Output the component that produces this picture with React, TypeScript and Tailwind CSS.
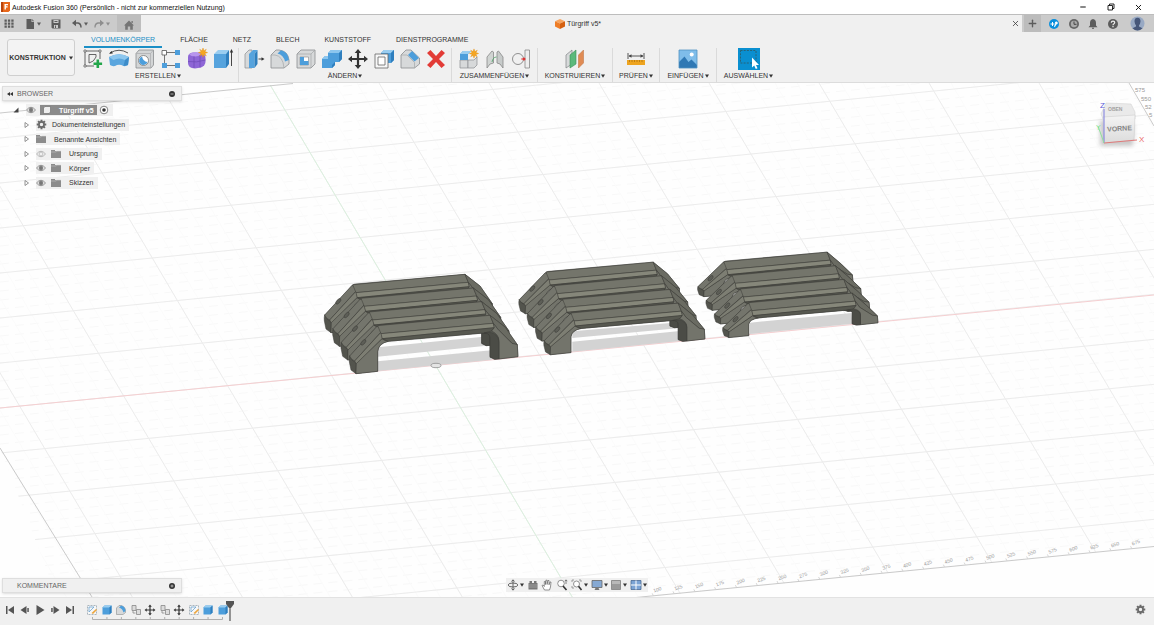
import React from "react";
import { Minus, X, Plus } from "lucide-react";

type Kids = { children: React.ReactNode };

/* ---------- small shared pieces ---------- */

const Caret = () => (
  <svg viewBox="0 0 4 4" className="h-1 w-1 shrink-0" aria-hidden="true">
    <path d="M0 .5H4L2 3.8Z" fill="currentColor" />
  </svg>
);

const Ico = ({ children }: Kids) => (
  <svg viewBox="0 0 22 22" className="h-[22px] w-[22px] shrink-0" aria-hidden="true">
    {children}
  </svg>
);

const Mini = ({ children }: Kids) => (
  <svg viewBox="0 0 12 12" className="h-3 w-3 shrink-0" aria-hidden="true">
    {children}
  </svg>
);

const starPath = "M0-4.6 1-1.9 3.3-3.3 1.9-1 4.6 0 1.9 1 3.3 3.3 1 1.9 0 4.6-1 1.9-3.3 3.3-1.9 1-4.6 0-1.9-1-3.3-3.3-1-1.9Z";
const Star = ({ x, y }: { x: number; y: number }) => (
  <path transform={`translate(${x} ${y})`} d={starPath} fill="#f5a623" stroke="#e08d10" strokeWidth=".4" />
);

const movePath = "M11 1 14.3 5H12.1V9.9H17V7.7L21 11 17 14.3V12.1H12.1V17H14.3L11 21 7.7 17H9.9V12.1H5V14.3L1 11 5 7.7V9.9H9.9V5H7.7Z";

const gearTeeth = [0, 45, 90, 135, 180, 225, 270, 315];
const Gear = () => (
  <svg viewBox="-6 -6 12 12" className="h-[11px] w-[11px] shrink-0" aria-hidden="true">
    {gearTeeth.map((a) => (
      <rect key={a} x="-1.1" y="-5.2" width="2.2" height="3" transform={`rotate(${a})`} fill="#6a6a6a" />
    ))}
    <circle r="2.8" fill="none" stroke="#6a6a6a" strokeWidth="1.8" />
  </svg>
);

/* ---------- ribbon icons ---------- */

const icons = {
  sketch: (
    <Ico>
      <path d="M3 3H18M3 3V18H12M18 3V11" fill="none" stroke="#555" strokeWidth=".9" />
      <path d="M2 2h2v2H2zM17 2h2v2h-2zM2 17h2v2H2z" fill="#fff" stroke="#555" strokeWidth=".7" />
      <path d="M7 6.500H14L14 9Q12 14 7 15Z" fill="none" stroke="#555" strokeWidth=".9" />
      <path d="M14.500 11.500h2.600v3h3v2.600h-3v3h-2.600v-3h-3v-2.600h3z" fill="#22a64a" />
    </Ico>
  ),
  revolve: (
    <Ico>
      <path d="M2 5Q11-.5 20 5" fill="none" stroke="#444" strokeWidth=".9" />
      <path d="M3.600 2.900 1 5.800 4.800 5.500z" fill="#333" />
      <path d="M1 9Q11 3.500 21 9L20 17Q18 18.500 15.500 18Q11 15.500 7 18Q4 18.500 2 17Z" fill="#5ba6de" />
      <path d="M1 9Q11 3.500 21 9L17 12Q11 9 5.500 12Z" fill="#8cc6ee" />
      <path d="M17 12 21 9 20 17 15.500 18Z" fill="#3d8cc9" />
    </Ico>
  ),
  hole: (
    <Ico>
      <path d="M2 5.500 5 2H19.500V17L17 20H2Z" fill="#d3d5d6" stroke="#8a8d8f" strokeWidth=".8" />
      <path d="M2 5.500H16.500V20M16.500 5.500 19.500 2" fill="none" stroke="#a9abac" strokeWidth=".7" />
      <circle cx="9.500" cy="12.500" r="5" fill="#fff" stroke="#777" strokeWidth=".8" />
      <path d="M8 8.600A4.300 4.300 0 1 0 13.500 14Q9 13.500 8 8.600Z" fill="#4d9edb" />
    </Ico>
  ),
  pattern: (
    <Ico>
      <path d="M5 4.500H17M4.500 6V18M6 17.500H16" fill="none" stroke="#555" strokeWidth=".8" />
      <path d="M2 2.500H6.500V7H2Z" fill="#fff" stroke="#555" strokeWidth=".8" />
      <path d="M15 2h5v5h-5zM2 15h5v5H2zM15 15h5v5h-5z" fill="#4d9edb" />
    </Ico>
  ),
  form: (
    <Ico>
      <path d="M2 9Q2 5 7 4.500H15Q19.500 6 19.500 10V14Q19 18 15 19.500L9 20.500Q2 20 2 15Z" fill="#8e66d6" />
      <path d="M3 6.500Q6 4 10 4.300L17 5.500Q13 8 9.500 8.500Q5 8.500 3 6.500Z" fill="#b795ee" />
      <path d="M8 8.500V20M14 7V19.500M2 13.500Q10 15 19.500 12" fill="none" stroke="#6d49b5" strokeWidth=".7" />
      <Star x={17} y={4.600} />
    </Ico>
  ),
  extrude: (
    <Ico>
      <path d="M2 6 6 2H17L14 6Z" fill="#9acdf0" />
      <path d="M2 6H14V20H2Z" fill="#56a3dd" />
      <path d="M14 6 17 2V16L14 20Z" fill="#2f7fbe" />
      <path d="M19.500 18V4" stroke="#333" strokeWidth=".9" />
      <path d="M19.500 1 21.200 4.500H17.800Z" fill="#333" />
    </Ico>
  ),
  pushPull: (
    <Ico>
      <path d="M2 6 6 2H9V20H2Z" fill="#d7d9da" stroke="#8a8d8f" strokeWidth=".7" />
      <path d="M6 6 10 2H14.500L11.500 6V20H6Z" fill="#56a3dd" />
      <path d="M11.500 6 14.500 2V16L11.500 20Z" fill="#2f7fbe" />
      <path d="M15.500 11H19" stroke="#333" strokeWidth=".9" />
      <path d="M21.500 11 18.500 9.200V12.800Z" fill="#333" />
    </Ico>
  ),
  fillet: (
    <Ico>
      <path d="M2 7 7 2H10Q19 3 20 12V16L15 20H2Z" fill="#d7d9da" stroke="#8a8d8f" strokeWidth=".8" />
      <path d="M2 7H6Q14 8 15 20" fill="none" stroke="#a4a6a7" strokeWidth=".7" />
      <path d="M8.500 5.500 12 2.200Q19 4 20 12L16 13.500Q14.500 7 8.500 5.500Z" fill="#4d9edb" />
    </Ico>
  ),
  shell: (
    <Ico>
      <path d="M2 6 6 2H20V16L16 20H2Z" fill="#d7d9da" stroke="#8a8d8f" strokeWidth=".8" />
      <path d="M2 6H16V20M16 6 20 2" fill="none" stroke="#a4a6a7" strokeWidth=".7" />
      <path d="M5 9H13.500V17H5Z" fill="#fff" stroke="#888" strokeWidth=".6" />
      <path d="M5 9 9 9V13L13.500 13V17H5Z" fill="#4d9edb" />
    </Ico>
  ),
  combine: (
    <Ico>
      <path d="M7 5 10 2H21V11L18 14H14V17L11 20H1V11L4 8H7Z" fill="#4d9edb" />
      <path d="M7 5 10 2H21L18 5ZM1 11 4 8H7V11Z" fill="#8cc6ee" />
      <path d="M18 5 21 2V11L18 14ZM11 17 14 14V17L11 20Z" fill="#2f7fbe" />
    </Ico>
  ),
  move: (
    <Ico>
      <path d={movePath} fill="#333" />
    </Ico>
  ),
  offset: (
    <Ico>
      <path d="M8 5 11 2H21V12L18 15H8Z" fill="#4d9edb" />
      <path d="M8 5 11 2H21L18 5Z" fill="#9acdf0" />
      <path d="M18 5 21 2V12L18 15Z" fill="#2f7fbe" />
      <path d="M2 6H15V20H2Z" fill="#f7f7f7" stroke="#666" strokeWidth=".8" />
      <path d="M5 9H12V17H5Z" fill="#fff" stroke="#666" strokeWidth=".8" />
    </Ico>
  ),
  chamfer: (
    <Ico>
      <path d="M2 7 7 2H12L20.500 10V16L15.500 20H2Z" fill="#d7d9da" stroke="#8a8d8f" strokeWidth=".8" />
      <path d="M2 7H8L15.500 14.500V20" fill="none" stroke="#a4a6a7" strokeWidth=".7" />
      <path d="M9 7 13 3 20 10 15.500 13.500Z" fill="#4d9edb" />
    </Ico>
  ),
  remove: (
    <Ico>
      <path d="M5.500 2 11 8 16.500 2 20 5 14 11 20 17 16.500 20 11 14 5.500 20 2 17 8 11 2 5Z" fill="#e23b36" />
    </Ico>
  ),
  newComponent: (
    <Ico>
      <path d="M2 12 10 12V20H2Z" fill="#d7d9da" stroke="#8a8d8f" strokeWidth=".7" />
      <path d="M10 12H16L19 9V17L16 20H10Z" fill="#d7d9da" stroke="#8a8d8f" strokeWidth=".7" />
      <path d="M2 6 5 3H13L10 6V12H2Z" fill="#4d9edb" />
      <path d="M2 6 5 3H13L10 6Z" fill="#9acdf0" />
      <Star x={16} y={5.500} />
    </Ico>
  ),
  joint: (
    <Ico>
      <path d="M3 9 8 3 9.500 4V15L6 16 3 20Z" fill="#d0d4d2" stroke="#888" strokeWidth=".8" />
      <path d="M13 4 14.500 3 19 9V20L16 16 13 15Z" fill="#c7cbca" stroke="#888" strokeWidth=".8" />
      <path d="M8 14Q9 9 12.500 9" fill="none" stroke="#4aa364" strokeWidth=".8" />
    </Ico>
  ),
  jointOrigin: (
    <Ico>
      <circle cx="8" cy="11" r="5.500" fill="none" stroke="#777" strokeWidth=".8" />
      <path d="M15 2H19.500V20H15Z" fill="#eee" stroke="#888" strokeWidth=".8" />
      <path d="M11 11H15" stroke="#d33" strokeWidth=".8" />
      <circle cx="14" cy="11" r="1.500" fill="#d33" />
    </Ico>
  ),
  plane: (
    <Ico>
      <path d="M2 7 8 2V16L2 20Z" fill="#d7d9da" stroke="#7f8385" strokeWidth=".7" />
      <path d="M6 7 12 2V16L6 20Z" fill="#5bb97b" stroke="#3d8e59" strokeWidth=".6" />
      <path d="M14.500 7 19.500 2V15L14.500 20Z" fill="#e08b54" stroke="#bb6c3a" strokeWidth=".5" />
    </Ico>
  ),
  measure: (
    <Ico>
      <path d="M3 5V11M19 5V11M4 8H18" stroke="#444" strokeWidth=".9" />
      <path d="M3.500 8 6.500 6.300V9.700ZM18.500 8 15.500 6.300V9.700Z" fill="#444" />
      <path d="M2 12H20V17H2Z" fill="#eea41f" />
      <path d="M4.500 12V14M7 12V14M9.500 12V14M12 12V14M14.500 12V14M17 12V14" stroke="#a86f0c" strokeWidth=".7" />
    </Ico>
  ),
  insert: (
    <Ico>
      <path d="M2 2H20V20H2Z" fill="#7fbdea" />
      <path d="M2 14 7.500 8.500 11.500 14 14.500 11.500 20 17V20H2Z" fill="#2f78b4" />
      <circle cx="14.700" cy="6.500" r="2" fill="#fff" />
      <path d="M2 2H20V20H2Z" fill="none" stroke="#5292c2" strokeWidth=".8" />
    </Ico>
  ),
  select: (
    <Ico>
      <path d="M0 0H22V22H0Z" fill="#0a8fd0" />
      <path d="M2.500 2.500H18V15H2.500Z" fill="none" stroke="#2b5f6e" strokeWidth=".9" strokeDasharray="2 1.200" />
      <path d="M14 9.500V19.500L16.200 17.500 17.800 21 19.500 20.200 18 17H21Z" fill="#fff" />
    </Ico>
  ),
};

type Group = { label: string; width: string; tools: [string, React.ReactNode][] };

const groups: Group[] = [
  {
    label: "ERSTELLEN",
    width: "w-[160px]",
    tools: [
      ["Skizze erstellen", icons.sketch],
      ["Drehen", icons.revolve],
      ["Bohrung", icons.hole],
      ["Anordnung", icons.pattern],
      ["Form", icons.form],
      ["Extrusion", icons.extrude],
    ],
  },
  {
    label: "ÄNDERN",
    width: "w-[213px]",
    tools: [
      ["Drücken/Ziehen", icons.pushPull],
      ["Abrundung", icons.fillet],
      ["Schale", icons.shell],
      ["Kombinieren", icons.combine],
      ["Verschieben", icons.move],
      ["Versatz", icons.offset],
      ["Fase", icons.chamfer],
      ["Entfernen", icons.remove],
    ],
  },
  {
    label: "ZUSAMMENFÜGEN",
    width: "w-[86px]",
    tools: [
      ["Neue Komponente", icons.newComponent],
      ["Verbinden", icons.joint],
      ["Verbindungsursprung", icons.jointOrigin],
    ],
  },
  { label: "KONSTRUIEREN", width: "w-[75px]", tools: [["Ebene", icons.plane]] },
  { label: "PRÜFEN", width: "w-[47px]", tools: [["Messen", icons.measure]] },
  { label: "EINFÜGEN", width: "w-[57px]", tools: [["Bild", icons.insert]] },
  { label: "AUSWÄHLEN", width: "w-[64px]", tools: [["Auswählen", icons.select]] },
];

const tabs = ["VOLUMENKÖRPER", "FLÄCHE", "NETZ", "BLECH", "KUNSTSTOFF", "DIENSTPROGRAMME"];

/* ---------- header ---------- */

function TitleBar() {
  return (
    <header className="flex h-[14px] items-center bg-white pl-px text-[#111]">
      <svg viewBox="0 0 9 10" className="h-[10px] w-[9px]" aria-hidden="true">
        <path d="M0 0H9V8.500L7.500 10H0Z" fill="#e8681c" />
        <path d="M0 0H2V10H0Z" fill="#b8440d" />
        <path d="M3.500 2H7V3.200H4.900V4.300H6.600V5.400H4.900V7.500H3.500Z" fill="#fff" />
      </svg>
      <h1 className="ml-[2px] flex-1 whitespace-nowrap text-[7px] leading-none">
        Autodesk Fusion 360 (Persönlich - nicht zur kommerziellen Nutzung)
      </h1>
      <div className="flex w-[75px] justify-between pr-[11px]">
        <button aria-label="Minimieren"><Minus size={8} strokeWidth={3} /></button>
        <button aria-label="Wiederherstellen">
          <svg viewBox="0 0 8 8" className="h-2 w-2" aria-hidden="true">
            <path d="M1 2.500H5.500V7H1ZM2.500 2.500V1H7V5.500H5.500" fill="none" stroke="#111" strokeWidth=".9" />
          </svg>
        </button>
        <button aria-label="Schließen"><X size={9} strokeWidth={2.5} /></button>
      </div>
    </header>
  );
}

function AppBar() {
  return (
    <div className="flex h-[18px] items-stretch border-t border-[#bdbdbd] bg-[#cbcbcb] text-[#5c5c5c]">
      <div className="flex w-[117px] items-center pl-[3px]">
        <button aria-label="Datenbereich" className="mr-[9px]">
          <Mini>
            {[2, 5, 8].map((y) => (
              <path key={y} d={`M1.500 ${y - 0.500}h2.300v2.200H1.500zM4.900 ${y - 0.500}h2.300v2.200H4.900zM8.300 ${y - 0.500}h2.300v2.200H8.300z`} fill="#5c5c5c" />
            ))}
          </Mini>
        </button>
        <button aria-label="Datei" className="mr-[9px] flex items-center gap-px">
          <Mini><path d="M2.500 1H7.500V4H10V11H2.500ZM8.300 1 10 3.200H8.300Z" fill="#5c5c5c" /></Mini>
          <Caret />
        </button>
        <button aria-label="Speichern" className="mr-[9px]">
          <Mini>
            <path d="M1.500 1.500H10.500V10.500H2.500L1.500 9.500Z" fill="#5c5c5c" />
            <path d="M3.500 2H8.500V5H3.500ZM4 7H8V10H4Z" fill="#cbcbcb" />
            <path d="M5 7.500H6V10H5ZM4.500 3H7.500V4H4.500Z" fill="#5c5c5c" />
          </Mini>
        </button>
        <button aria-label="Rückgängig" className="mr-[5px] flex items-center gap-px">
          <Mini>
            <path d="M3 5H7Q10 5.500 10 9.500" fill="none" stroke="#5c5c5c" strokeWidth="1.500" />
            <path d="M1 5 5 1.800V8.200Z" fill="#5c5c5c" />
          </Mini>
          <Caret />
        </button>
        <button aria-label="Wiederholen" className="flex items-center gap-px text-[#8e8e8e]">
          <Mini>
            <path d="M9 5H5Q2 5.500 2 9.500" fill="none" stroke="#8e8e8e" strokeWidth="1.300" />
            <path d="M11 5 7 1.800V8.200Z" fill="#8e8e8e" />
          </Mini>
          <Caret />
        </button>
      </div>
      <button aria-label="Startseite" className="flex w-6 items-center justify-center bg-[#bebebe] pt-[2px]">
        <Mini><path d="M6 1.500 11 6.500H9.800V10.800H7.200V7.500H4.800V10.800H2.200V6.500H1ZM8.500 2H9.800V4H8.500Z" fill="#757575" /></Mini>
      </button>
      <div className="flex flex-1 items-center bg-[#f0f0f0] pr-[2px] text-[#333]">
        <div className="flex flex-1 items-center justify-center gap-[2px] pl-1 text-[7px]">
          <svg viewBox="0 0 10 10" className="h-[10px] w-[10px]" aria-hidden="true">
            <path d="M5 0 10 2.200 5 4.500 0 2.200Z" fill="#f7a45e" />
            <path d="M0 2.200 5 4.500V10L0 7.500Z" fill="#ee7d26" />
            <path d="M10 2.200 5 4.500V10L10 7.500Z" fill="#d5600f" />
          </svg>
          <span>Türgriff v5*</span>
        </div>
        <button aria-label="Dokument schließen"><X size={9} strokeWidth={2} /></button>
      </div>
      <div className="flex w-[132px] items-center">
        <button aria-label="Neues Dokument" className="mx-[2px] flex h-full w-[17px] items-center justify-center bg-[#bcbcbc]">
          <Plus size={11} strokeWidth={3} />
        </button>
        <div className="flex flex-1 items-center justify-between pl-[5px] pr-[9px]">
          <button aria-label="Erweiterungen">
            <Mini>
              <circle cx="6" cy="6" r="5" fill="#0a8fdc" />
              <path d="M4 4h1v1.500h1.500v1H5v1.500H4V6.500H2.500V5.500H4zM7 4.200a1.500 1.500 0 1 1 1.300 2.300L6.800 9.300 6 8.300 7.200 6z" fill="#fff" />
            </Mini>
          </button>
          <button aria-label="Auftragsstatus">
            <Mini>
              <circle cx="6" cy="6" r="5" fill="#666" />
              <circle cx="6" cy="6" r="3.200" fill="#aaa" />
              <path d="M6 3.500V6.300H8.500" fill="none" stroke="#444" strokeWidth="1" />
            </Mini>
          </button>
          <button aria-label="Benachrichtigungen">
            <Mini><path d="M6 1Q9 1.500 9 5V7.500L10.500 9.300H1.500L3 7.500V5Q3 1.500 6 1ZM4.800 9.800H7.200Q7 11 6 11 5 11 4.800 9.800Z" fill="#5c5c5c" /></Mini>
          </button>
          <button aria-label="Hilfe">
            <Mini>
              <circle cx="6" cy="6" r="5" fill="#5c5c5c" />
              <path d="M4.300 4.800Q4.300 3.200 6 3.200 7.700 3.200 7.700 4.600 7.700 5.500 6.700 6 6 6.400 6 7.200M6 8V9.200" fill="none" stroke="#eee" strokeWidth="1.200" />
            </Mini>
          </button>
          <button aria-label="Profil" className="ml-1">
            <svg viewBox="0 0 15 15" className="h-[15px] w-[15px]" aria-hidden="true">
              <circle cx="7.500" cy="7.500" r="7" fill="#98a9c4" />
              <path d="M7.500 1.800Q10.700 2 10.500 5.500 10.300 8 9 9.300V10.500L12.500 12.300Q10 14.600 7.500 14.500 5 14.600 2.500 12.300L6 10.500V9.300Q4.700 8 4.500 5.500 4.300 2 7.500 1.800Z" fill="#46577a" />
            </svg>
          </button>
        </div>
      </div>
    </div>
  );
}

function Ribbon() {
  return (
    <div className="flex h-[51px] items-start border-b border-[#dcdcdc] bg-[#f0f0f0] text-[7px] text-[#333]">
      <button className="ml-[7px] mt-[7px] flex h-[37px] w-[68px] shrink-0 items-center justify-center gap-[3px] rounded-[3px] border border-[#cfcfcf] bg-[#f3f3f3] font-bold">
        KONSTRUKTION
        <Caret />
      </button>
      <div className="ml-[3px] pt-px">
        <nav className="ml-[6px] flex gap-[11px]">
          {tabs.map((t, i) => (
            <button
              key={t}
              className={
                i === 0
                  ? "h-[15px] border-b-2 border-[#1b8fc6] px-[7px] text-[#1b8fc6]"
                  : "h-[15px] border-b-2 border-transparent px-[7px]"
              }
            >
              {t}
            </button>
          ))}
        </nav>
        <div className="flex">
          {groups.map((g, i) => (
            <section key={g.label} className={`flex h-[34px] flex-col items-center ${g.width} ${i ? "border-l border-[#dadada]" : ""}`}>
              <div className="flex gap-1">
                {g.tools.map(([name, icon]) => (
                  <button key={name} aria-label={name}>{icon}</button>
                ))}
              </div>
              <button className="mt-px flex items-center gap-px whitespace-nowrap leading-[10px]">
                {g.label}
                <Caret />
              </button>
            </section>
          ))}
        </div>
      </div>
    </div>
  );
}

/* ---------- 3D viewport ---------- */

const range = (a: number, b: number) => Array.from({ length: b - a + 1 }, (_, i) => a + i);

/*
 * A handle is described once, in its tallest form. `sx` and `dx` place it
 * horizontally; everything deeper than KNEE below the top edge is shortened
 * by `leg`, so the bar keeps its thickness while the feet get shorter.
 */
type Fit = { sx: number; dx: number; top: number; leg: number };

const TOP_SLOPE = -0.09;
const KNEE = 47;

function place(x: number, y: number, f: Fit): [number, number] {
  const depth = y - (196 + TOP_SLOPE * (x - 205));
  const d = depth <= KNEE ? depth : KNEE + (depth - KNEE) * f.leg;
  const px = f.sx * x + f.dx;
  const py = f.top + TOP_SLOPE * (px - (f.sx * 205 + f.dx)) + d;
  return [Math.round(px * 10) / 10, Math.round(py * 10) / 10];
}

const bend = (d: string, f: Fit) =>
  d.replace(/(\d+) (\d+)/g, (_, x, y) => place(Number(x), Number(y), f).join(" "));

const faces: [string, string][] = [
  ["M120 288L203 198Q207 195 212 195L540 166L584 200L622 254L624 290L555 298L540 292L540 230Q538 218 522 219L235 244Q205 250 203 275L203 334L138 341L121 305Z", "#5b5c55"],
  ["M119 287Q117 295 118 306L123 330L138 341L139 310Q126 304 119 287Z", "#53544d"],
  ["M139 310L216 236Q222 242 235 244Q205 250 203 275L203 334L138 341Z", "#73746b"],
  ["M119 288L200 200Q210 197 213 216L134 303Q124 300 119 288Z", "#74756c"],
  ["M134 303L213 217L217 235L139 311Z", "#7d7e73"],
  ["M203 197L540 166L550 190L213 221Z", "#74756b"],
  ["M213 221L550 190L553 203L217 236Z", "#86877a"],
  ["M217 236L553 203L545 213L522 219L235 244Z", "#575850"],
  ["M540 166L586 202L622 254L606 250L564 208L550 190Z", "#6a6b62"],
  ["M550 190L564 208L606 250L622 254L624 290L567 297L567 242Q566 222 545 213L553 203Z", "#73746b"],
  ["M522 219Q548 214 557 224Q567 232 567 246L567 297L553 298L540 290L540 232Q538 219 522 219Z", "#4b4c46"],
];

function Bar({ fit }: { fit: Fit }) {
  const [hx, hy] = place(160, 247, fit);
  return (
    <g stroke="#3a3b36" strokeWidth="1.500" strokeLinejoin="round">
      {faces.map(([d, fill]) => (
        <path key={d} d={bend(d, fit)} fill={fill} />
      ))}
      <ellipse cx={hx} cy={hy} rx="10" ry="5" transform={`rotate(-48 ${hx} ${hy})`} fill="#5d5e57" />
    </g>
  );
}

type AssemblyProps = { x: number; y: number; fit: Fit; bands: string };

function Assembly({ x, y, fit, bands }: AssemblyProps) {
  return (
    <g transform={`translate(${x} ${y}) scale(.3333)`}>
      <path d={bands} fill="#d3d3d3" />
      {[3, 2, 1, 0].map((k) => (
        <g key={k} transform={`translate(${-25 * k} ${-41 * k})`}>
          <Bar fit={fit} />
        </g>
      ))}
    </g>
  );
}

const SLOPE = 0.0985;
const LEAN = 0.59;

/* x of a leaning grid line (index n counted from the green axis) at height y */
const leanX = (n: number, y: number) => 436 + 110 * n + (y - 366) * LEAN;

function Viewport() {
  return (
    <svg
      viewBox="0 83 1154 514"
      preserveAspectRatio="xMidYMid slice"
      className="absolute inset-0 h-full w-full"
      role="img"
      aria-label="3D-Ansicht Türgriff"
    >
      <defs>
        <clipPath id="plane">
          <path d="M0 113 293 83H1129L1330 420 1154 546 79 654 0 448Z" />
        </clipPath>
        <linearGradient id="cube" x1="0" y1="0" x2="0" y2="1">
          <stop offset="0" stopColor="#f4f4f4" />
          <stop offset="1" stopColor="#dcdcdc" />
        </linearGradient>
        <filter id="soft"><feGaussianBlur stdDeviation="2" /></filter>
      </defs>
      <g clipPath="url(#plane)">
        <g stroke="#f8f8f8" strokeWidth="1" strokeDasharray="9 6">
          {range(-32, 28).map((k) => (
            <path key={k} d={`M0 ${408 + k * 9}L1154 ${408 + k * 9 - 1154 * SLOPE}`} />
          ))}
        </g>
        <g stroke="#fbfbfb" strokeWidth="1">
          {range(-28, 50).map((k) => (
            <path key={k} d={`M${leanX(k / 5, 83)} 83L${leanX(k / 5, 600)} 600`} />
          ))}
        </g>
        <g stroke="#ececec" strokeWidth="1">
          {range(-6, 5).map((k) => (
            <path key={k} d={`M0 ${408 + k * 45}L1154 ${408 + k * 45 - 1154 * SLOPE}`} />
          ))}
          {range(-6, 8).map((k) => (
            <path key={k} d={`M${leanX(k, 83)} 83L${leanX(k, 600)} 600`} />
          ))}
        </g>
        <path d="M269 83 574 600" stroke="#dcf1df" strokeWidth="1" />
      </g>
      <path d="M0 408 1154 295" stroke="#f5cfd1" strokeWidth="1" />
      <g stroke="#bdbdbd" strokeWidth=".8">
        <path d="M0 113 293 83.500M0 448 92 597M1129 83 1154 126M636 597.500 1154 546.500" />
      </g>
      <g fill="#999" fontSize="6" fontFamily="Liberation Sans, Arial, sans-serif">
        {range(4, 27).map((k) => {
          const x = 574 + k * 20.800;
          const y = 599 - (x - 600) * SLOPE;
          return (
            <g key={k}>
              <path d={`M${x - 4} ${y + 2}l-1-2`} stroke="#bbb" strokeWidth=".6" />
              <text x={x - 4} y={y - 2} fontSize="5" transform={`rotate(-20 ${x} ${y - 4})`}>{k * 25}</text>
            </g>
          );
        })}
        <text x="1135" y="92">575</text>
        <text x="1141" y="101">550</text>
        <text x="1145" y="109">52</text>
        <text x="1149" y="117">5</text>
      </g>

      <Assembly
        x={310}
        y={260}
        fit={{ sx: 1, dx: 0, top: 196, leg: 1 }}
        bands="M203 262L520 230L545 256L203 290ZM203 304L545 271L545 299L203 333Z"
      />
      <Assembly
        x={510}
        y={250}
        fit={{ sx: 0.955, dx: -11, top: 188, leg: 0.8 }}
        bands="M187 244L490 218L512 234L187 264ZM187 275L510 243L510 273L187 305Z"
      />
      <Assembly
        x={690}
        y={240}
        fit={{ sx: 0.921, dx: -10.700, top: 187, leg: 0.58 }}
        bands="M180 248L484 219L488 251L180 282Z"
      />
      <ellipse cx="436" cy="365.500" rx="5" ry="2.200" fill="#e4e4e4" stroke="#8d8d8d" strokeWidth=".8" />

      <g fontFamily="Liberation Sans, Arial, sans-serif">
        <path d="M1100 120 1134 124 1133 146 1100 146Z" fill="#c9c9c9" filter="url(#soft)" />
        <path d="M1101 114 1106 103 1131 104 1135 112 1135 119 1103 119Z" fill="#eaeaea" stroke="#d4d4d4" strokeWidth=".6" />
        <path d="M1103 117 1135 115 1134 140 1104 143Z" fill="url(#cube)" stroke="#cfcfcf" strokeWidth=".6" />
        <text x="1108" y="111" fontSize="5" fill="#a0a0a0" fontWeight="700">OBEN</text>
        <text x="1107" y="131" fontSize="7" fill="#858585" fontWeight="700" transform="rotate(-4 1119 128)">VORNE</text>
        <path d="M1104 109V143" stroke="#7d7de0" strokeWidth="1" />
        <path d="M1104 143 1137 140" stroke="#e07a7a" strokeWidth="1" />
        <path d="M1104 143 1098 126" stroke="#8fe09a" strokeWidth="1" />
        <text x="1100" y="108" fontSize="8" fill="#5b5bd8">Z</text>
        <text x="1139" y="142" fontSize="8" fill="#ea6a6a">X</text>
        <text x="1096" y="130" fontSize="7" fill="#86e294">Y</text>
      </g>
    </svg>
  );
}

/* ---------- browser panel ---------- */

const Eye = ({ off = false }: { off?: boolean }) => (
  <svg viewBox="0 0 10 8" className="h-2 w-[10px] shrink-0" aria-hidden="true">
    <path d="M.5 4Q5-1.500 9.500 4 5 9.500 .5 4Z" fill="none" stroke={off ? "#b0b0b0" : "#888"} strokeWidth=".9" />
    <circle cx="5" cy="4" r="1.900" fill={off ? "none" : "#777"} stroke={off ? "#b0b0b0" : "#777"} strokeWidth=".7" />
  </svg>
);

const Folder = () => (
  <svg viewBox="0 0 10 8" className="h-2 w-[10px] shrink-0" aria-hidden="true">
    <path d="M0 0H4V1H10V8H0Z" fill="#8c8c8c" />
    <path d="M0 2H5L6 1.200H10" fill="none" stroke="#ccc" strokeWidth=".5" />
  </svg>
);

const Expand = () => (
  <button aria-label="Aufklappen" className="ml-[22px] mr-[6px] w-[6px] shrink-0">
    <svg viewBox="0 0 6 6" className="h-[6px] w-[6px]" aria-hidden="true">
      <path d="M1 .5 4.500 3 1 5.500Z" fill="#fff" stroke="#777" strokeWidth=".8" />
    </svg>
  </button>
);

const PanelDot = ({ plus = false }: { plus?: boolean }) => (
  <svg viewBox="0 0 6 6" className="h-[6px] w-[6px]" aria-hidden="true">
    <circle cx="3" cy="3" r="3" fill="#333" />
    <path d={plus ? "M1.500 3H4.500M3 1.500V4.500" : "M1.500 3H4.500"} stroke="#ddd" strokeWidth=".7" />
  </svg>
);

function PanelHeader({ title, plus, arrows }: { title: string; plus?: boolean; arrows?: boolean }) {
  return (
    <div className="flex h-[15px] w-[180px] items-center border border-[#dedede] bg-[#f0f0f0] pr-[6px] text-[7px] text-[#666] shadow-sm">
      <span className="flex w-[14px] justify-center">
        {arrows && (
          <svg viewBox="0 0 6 4" className="h-1 w-[6px]" aria-hidden="true">
            <path d="M0 2 3 0V4ZM3 2 6 0V4Z" fill="#333" />
          </svg>
        )}
      </span>
      <h2 className="flex-1">{title}</h2>
      <button aria-label={`${title} Optionen`}><PanelDot plus={plus} /></button>
    </div>
  );
}

const rows: { label: string; icons: React.ReactNode; pad: string }[] = [
  { label: "Dokumenteinstellungen", icons: <Gear />, pad: "" },
  { label: "Benannte Ansichten", icons: <Folder />, pad: "pl-[3px]" },
  { label: "Ursprung", icons: <><Eye off /><Folder /></>, pad: "pl-[3px]" },
  { label: "Körper", icons: <><Eye /><Folder /></>, pad: "pl-[3px]" },
  { label: "Skizzen", icons: <><Eye /><Folder /></>, pad: "pl-[3px]" },
];

function BrowserTree() {
  return (
    <ul className="mt-[2px] flex h-[87px] flex-col text-[7px] text-[#333]">
      <li className="flex flex-1 items-center">
        <svg viewBox="0 0 6 6" className="ml-[11px] mr-[7px] h-[6px] w-[6px]" aria-hidden="true">
          <path d="M5.500 .5V5.500H.5Z" fill="#444" />
        </svg>
        <div className="flex h-3 items-center bg-[#f0f0f0] pr-1">
          <Eye />
          <button className="ml-1 mr-[2px] flex h-[10px] items-center bg-[#8b8b8b] px-[3px] font-bold text-white">
            <svg viewBox="0 0 8 8" className="mr-2 h-2 w-2" aria-hidden="true">
              <path d="M.5 2 2 .5H7.500V6L6 7.500H.5Z" fill="#eee" stroke="#666" strokeWidth=".6" />
            </svg>
            Türgriff v5
          </button>
          <svg viewBox="0 0 10 10" className="h-[10px] w-[10px]" aria-hidden="true">
            <circle cx="5" cy="5" r="3.800" fill="#fff" stroke="#666" strokeWidth=".8" />
            <circle cx="5" cy="5" r="1.800" fill="#333" />
          </svg>
        </div>
      </li>
      {rows.map((r) => (
        <li key={r.label} className="flex flex-1 items-center">
          <Expand />
          <div className="flex h-3 items-center gap-[5px] bg-[#f0f0f0] pr-1">
            {r.icons}
            <span className={r.pad}>{r.label}</span>
          </div>
        </li>
      ))}
    </ul>
  );
}

/* ---------- view navigation ---------- */

const navTools: { name: string; caret: boolean; icon: React.ReactNode }[] = [
  {
    name: "Orbit", caret: true,
    icon: <Mini><path d="M6 1V11M4.500 2.500 6 .8 7.500 2.500M4.500 9.500 6 11.200 7.500 9.500" fill="none" stroke="#555" strokeWidth=".9" /><ellipse cx="6" cy="6" rx="4.800" ry="2" fill="none" stroke="#555" strokeWidth=".9" /></Mini>,
  },
  {
    name: "Ansicht nach", caret: false,
    icon: <Mini><path d="M1.500 4H10.500V10.500H1.500ZM2.500 2H5V4H2.500ZM7 2H9.500V4H7Z" fill="#777" /><path d="M2 6H10M2 8H10" stroke="#bbb" strokeWidth=".6" /></Mini>,
  },
  {
    name: "Pan", caret: false,
    icon: <Mini><path d="M3.500 11 1 6.500 2 6 3.300 7.500V2.500H4.500V5.500L4.900 1.200H6.100V5.500L6.900 1.500H8V5.800L9 3H10L9.500 8 8.500 11Z" fill="#fff" stroke="#666" strokeWidth=".7" /></Mini>,
  },
  {
    name: "Zoom", caret: false,
    icon: <Mini><circle cx="5" cy="4.500" r="3.300" fill="#fff" stroke="#777" strokeWidth=".8" /><path d="M7 7 10.500 11" stroke="#333" strokeWidth="1.600" /><path d="M10 1V5M8.800 2.200 10 .8 11.200 2.200" fill="none" stroke="#555" strokeWidth=".7" /></Mini>,
  },
  {
    name: "Einpassen", caret: true,
    icon: <Mini><path d="M1 3V1H3M8 1H10V3M1 7V9H3" fill="none" stroke="#888" strokeWidth=".8" /><circle cx="5.500" cy="5" r="3" fill="#fff" stroke="#777" strokeWidth=".8" /><path d="M7.500 7.300 10.500 11" stroke="#333" strokeWidth="1.600" /></Mini>,
  },
  {
    name: "Anzeige", caret: true,
    icon: <Mini><path d="M1 1.500H11V8.500H1Z" fill="#86a9d3" stroke="#666" strokeWidth=".8" /><path d="M4.500 9H7.500L8.500 11H3.500Z" fill="#777" /></Mini>,
  },
  {
    name: "Raster", caret: true,
    icon: <Mini><path d="M1.500 1.500H10.500V10.500H1.500Z" fill="#9a9a9a" stroke="#777" strokeWidth=".7" /><path d="M2 2H10V5H2Z" fill="#b9b9b9" /></Mini>,
  },
  {
    name: "Ansichtsfenster", caret: true,
    icon: <Mini><path d="M1 1.500H11V10.500H1Z" fill="#7ba3d4" stroke="#4a6a93" strokeWidth=".8" /><path d="M6 1.500V10.500M1 6H11" stroke="#fff" strokeWidth="1" /></Mini>,
  },
];

function NavBar() {
  return (
    <div className="flex h-[14px] w-[142px] items-center justify-between bg-[#f0f0f0] px-px text-[#333]">
      {navTools.map((n) => (
        <button key={n.name} aria-label={n.name} className="flex items-center gap-px">
          {n.icon}
          {n.caret && <Caret />}
        </button>
      ))}
    </div>
  );
}

/* ---------- timeline ---------- */

const tSketch = <Mini><path d="M1.500 1.500H10.500V10.500H1.500Z" fill="#f7f7f7" stroke="#8a9aa5" strokeWidth=".7" strokeDasharray="2 1" /><path d="M3 3H8L3 8Z" fill="none" stroke="#5a9acb" strokeWidth=".7" /><path d="M5.500 9 10 5 11 6 7 10Z" fill="#eda63d" /></Mini>;
const tExtrude = <Mini><path d="M1.500 3.500 3.500 1.500H10.500V8.500L8.500 10.500H1.500Z" fill="#4d9edb" /><path d="M1.500 3.500 3.500 1.500H10.500L8.500 3.500Z" fill="#9acdf0" /><path d="M8.500 3.500 10.500 1.500V8.500L8.500 10.500Z" fill="#2f7fbe" /></Mini>;
const tFillet = <Mini><path d="M1.500 4 4 1.500H6Q10.500 2.500 10.500 7V8.500L8 10.500H1.500Z" fill="#d7d9da" stroke="#8a8d8f" strokeWidth=".6" /><path d="M4 3.800 6 1.500Q10.500 2.500 10.500 7L8.500 8.500Q7.500 4.500 4 3.800Z" fill="#4d9edb" /></Mini>;
const tCopy = <Mini><path d="M2 1.500H6V6.500H2ZM6.500 5.500H10.500V10.500H6.500Z" fill="#dcdcdc" stroke="#888" strokeWidth=".8" /><path d="M3 7V9H5.500" fill="none" stroke="#888" strokeWidth=".8" /></Mini>;
const tMove = <Mini><path transform="scale(.545)" d={movePath} fill="#333" /></Mini>;

const features: [string, React.ReactNode][] = [
  ["Skizze 1", tSketch],
  ["Extrusion 1", tExtrude],
  ["Abrundung 1", tFillet],
  ["Kopie 1", tCopy],
  ["Verschieben 1", tMove],
  ["Kopie 2", tCopy],
  ["Verschieben 2", tMove],
  ["Skizze 2", tSketch],
  ["Extrusion 2", tExtrude],
  ["Extrusion 3", tExtrude],
];

const transport: [string, string][] = [
  ["Zum Anfang", "M2 2H3.500V10H2ZM10 2V10L4 6Z"],
  ["Schritt zurück", "M7.500 2V10L1.500 6ZM8.300 4H9.800V8H8.300Z"],
  ["Wiedergabe", "M2.500 1 10.500 6 2.500 11Z"],
  ["Schritt vor", "M4.500 2V10L10.500 6ZM2.200 4H3.700V8H2.200Z"],
  ["Zum Ende", "M8.500 2H10V10H8.500ZM2 2V10L8 6Z"],
];

function Timeline() {
  return (
    <footer className="flex h-7 items-start border-t border-[#e2e2e2] bg-[#f0f0f0] pl-1 pt-[6px]">
      <div className="flex gap-[3px]">
        {transport.map(([name, d]) => (
          <button key={name} aria-label={name}>
            <Mini><path d={d} fill="#555" /></Mini>
          </button>
        ))}
      </div>
      <div className="ml-[9px] w-[145px]">
        <div className="flex">
          {features.map(([name, icon]) => (
            <button key={name} aria-label={name} className="flex flex-1 justify-center">{icon}</button>
          ))}
        </div>
        <svg viewBox="0 0 145 5" className="h-[5px] w-full" aria-hidden="true">
          <path d="M7.500 3.500H137.500" stroke="#b0b0b0" strokeWidth="1" />
          {features.map(([name], i) => (
            <path key={name} d={`M${7.500 + i * 14.444} 1V3.500`} stroke="#b0b0b0" strokeWidth="1" />
          ))}
        </svg>
      </div>
      <svg viewBox="0 0 8 20" className="-ml-1 -mt-[3px] h-5 w-2" aria-hidden="true">
        <path d="M0 0H8V3L5 7H3L0 3Z" fill="#555" />
        <path d="M4 6V20" stroke="#555" strokeWidth="1.200" />
      </svg>
      <button aria-label="Einstellungen" className="ml-auto mr-2"><Gear /></button>
    </footer>
  );
}

export default function App() {
  return (
    <div className="flex h-screen flex-col overflow-hidden bg-white font-['Liberation_Sans',Arial,sans-serif] leading-none">
      <TitleBar />
      <AppBar />
      <Ribbon />
      <main className="relative min-h-0 flex-1 bg-[#fefefe]">
        <Viewport />
        <div className="relative flex h-full flex-col justify-between px-[2px] pb-1 pt-[3px]">
          <aside>
            <PanelHeader title="BROWSER" arrows />
            <BrowserTree />
          </aside>
          <div className="grid grid-cols-[1fr_auto_1fr] items-start">
            <PanelHeader title="KOMMENTARE" plus />
            <NavBar />
          </div>
        </div>
      </main>
      <Timeline />
    </div>
  );
}
